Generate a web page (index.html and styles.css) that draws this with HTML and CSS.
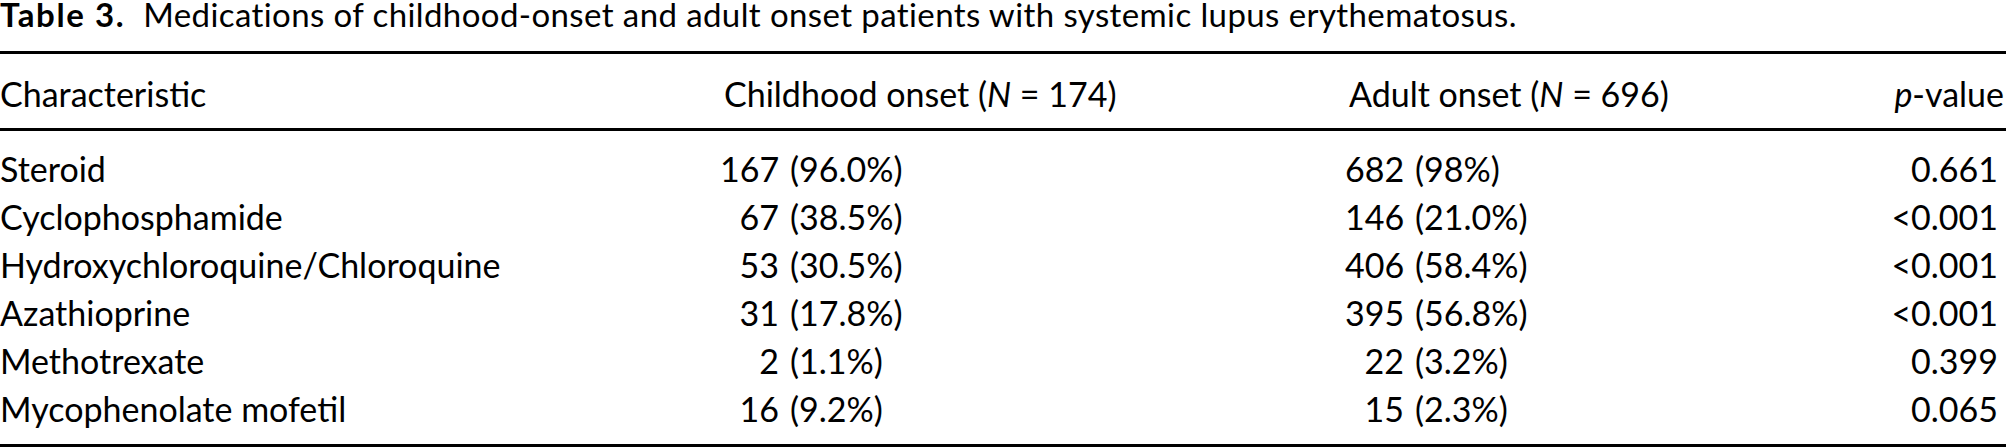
FILE: index.html
```html
<!DOCTYPE html>
<html lang="en">
<head>
<meta charset="utf-8">
<title>Table 3</title>
<link rel="stylesheet" href="styles.css">
</head>
<body>
<div class="page">
  <div class="caption"><span class="label">Table 3.</span>Medications of childhood-onset and adult onset patients with systemic lupus erythematosus.</div>
  <div class="table">
    <div class="row head">
      <div class="c-label">Characteristic</div>
      <div class="c-group g2">Childhood onset (<i>N</i> = 174)</div>
      <div class="c-group g3">Adult onset (<i>N</i> = 696)</div>
      <div class="c-p"><i>p</i>-value</div>
    </div>
    <div class="body">
      <div class="row">
        <div class="c-label">Steroid</div>
        <div class="c-n">167</div><div class="c-pct">(96.0%)</div>
        <div class="c-n">682</div><div class="c-pct">(98%)</div>
        <div class="c-p">0.661</div>
      </div>
      <div class="row">
        <div class="c-label">Cyclophosphamide</div>
        <div class="c-n">67</div><div class="c-pct">(38.5%)</div>
        <div class="c-n">146</div><div class="c-pct">(21.0%)</div>
        <div class="c-p">&lt;0.001</div>
      </div>
      <div class="row">
        <div class="c-label">Hydroxychloroquine/Chloroquine</div>
        <div class="c-n">53</div><div class="c-pct">(30.5%)</div>
        <div class="c-n">406</div><div class="c-pct">(58.4%)</div>
        <div class="c-p">&lt;0.001</div>
      </div>
      <div class="row">
        <div class="c-label">Azathioprine</div>
        <div class="c-n">31</div><div class="c-pct">(17.8%)</div>
        <div class="c-n">395</div><div class="c-pct">(56.8%)</div>
        <div class="c-p">&lt;0.001</div>
      </div>
      <div class="row">
        <div class="c-label">Methotrexate</div>
        <div class="c-n">2</div><div class="c-pct">(1.1%)</div>
        <div class="c-n">22</div><div class="c-pct">(3.2%)</div>
        <div class="c-p">0.399</div>
      </div>
      <div class="row">
        <div class="c-label">Mycophenolate mofetil</div>
        <div class="c-n">16</div><div class="c-pct">(9.2%)</div>
        <div class="c-n">15</div><div class="c-pct">(2.3%)</div>
        <div class="c-p">0.065</div>
      </div>
    </div>
  </div>
</div>
</body>
</html>
```
FILE: styles.css
```css
html, body {
  margin: 0;
  padding: 0;
  background: #ffffff;
}

.page {
  width: 2006px;
  font-family: "Lato", "Liberation Sans", sans-serif;
  font-size: 34px;
  color: #000;
}

.caption {
  font-size: 33px;
  line-height: 28px;
  margin-bottom: 23px;
  letter-spacing: 0.4px;
  white-space: nowrap;
}

.caption .label {
  font-weight: 700;
  letter-spacing: 1.6px;
  margin-right: 18px;
}

.table {
  border-top: 3px solid #000;
  border-bottom: 3px solid #000;
}

.row {
  display: grid;
  grid-template-columns: 720px 59px 566px 59px 1fr 150px;
  line-height: 48px;
  height: 48px;
  white-space: nowrap;
}

.row.head {
  padding: 16px 0 10px;
  border-bottom: 3px solid #000;
}

.body {
  padding: 14px 0 11px;
}

.c-label {
  text-align: left;
}

.c-group {
  grid-column: span 2;
  padding-left: 4px;
}

.c-n {
  text-align: right;
}

.c-pct {
  padding-left: 11px;
}

.c-p {
  text-align: right;
  padding-right: 8px;
}

.head .c-p {
  padding-right: 2px;
}
```
